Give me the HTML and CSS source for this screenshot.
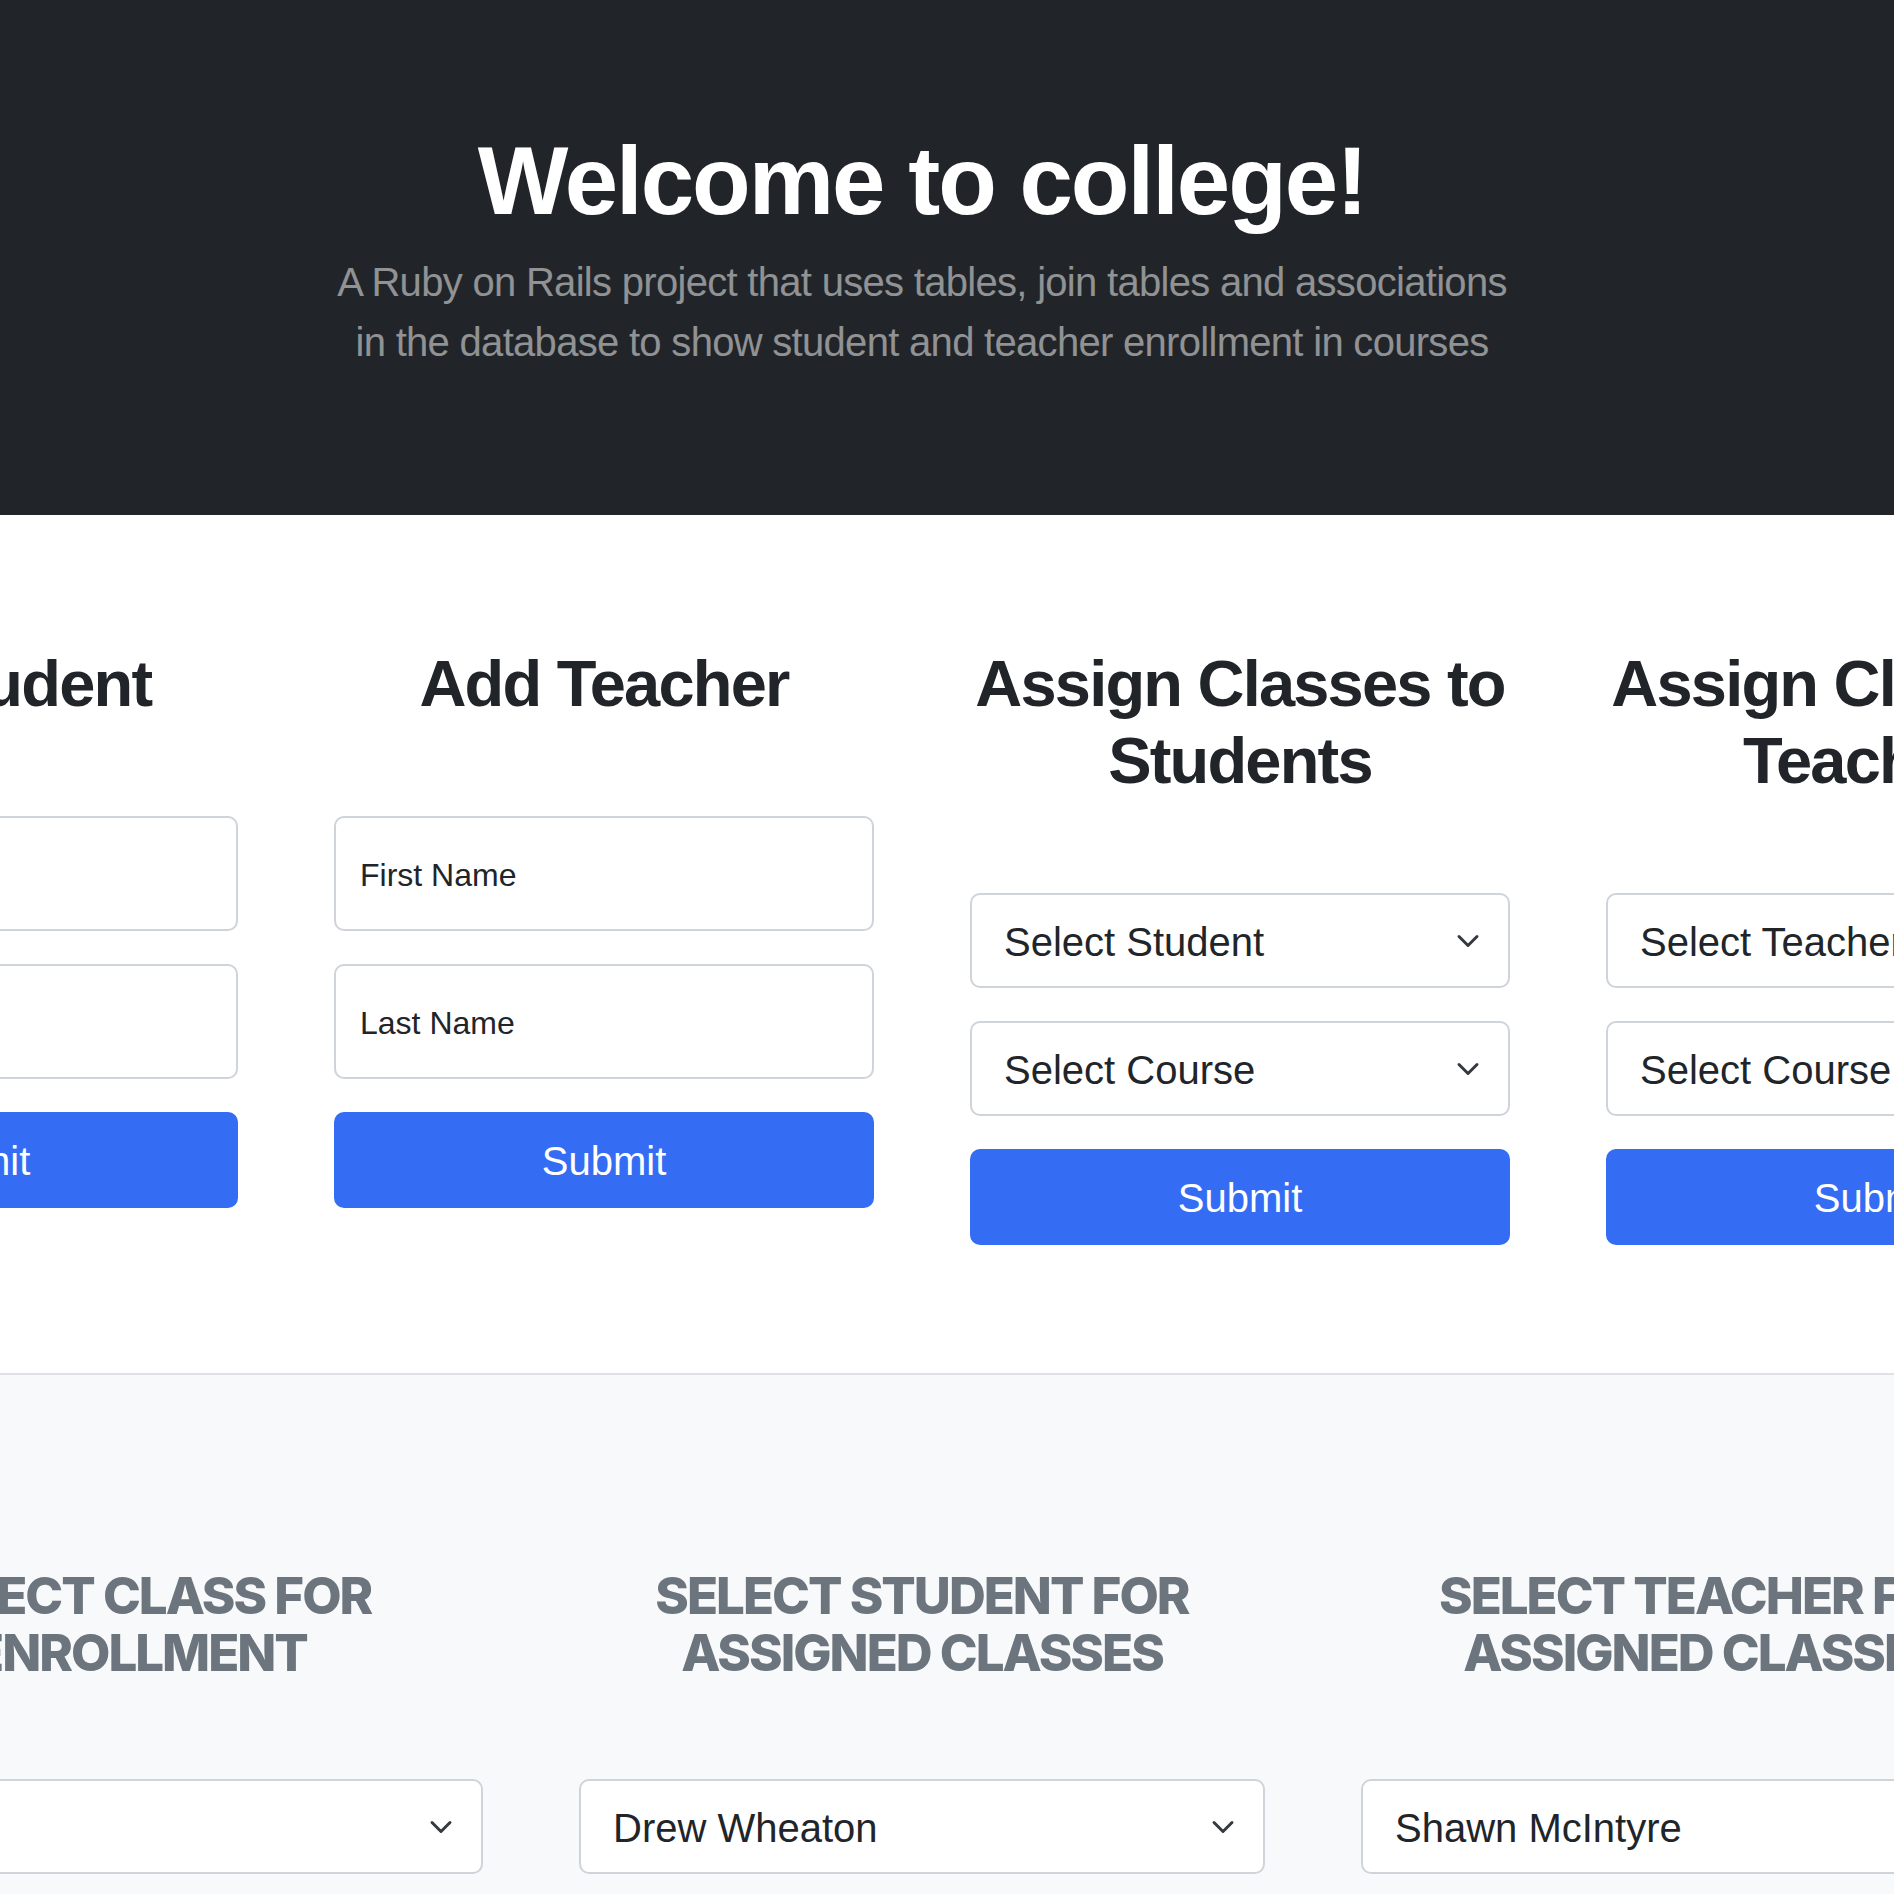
FILE: index.html
```html
<!DOCTYPE html>
<html lang="en">
<head>
<meta charset="utf-8">
<title>Welcome to college!</title>
<link rel="stylesheet" href="styles.css">
</head>
<body>
<header class="hero">
  <div class="inner">
    <h1 class="hero-title">Welcome to college!</h1>
    <p class="hero-lead">A Ruby on Rails project that uses tables, join tables and associations<br>in the database to show student and teacher enrollment in courses</p>
  </div>
</header>

<section class="forms">
  <div class="inner">
    <div class="row row-forms">
      <div class="col">
        <h2 class="col-title">Add Student</h2>
        <form class="stack">
          <input class="field" type="text" placeholder="First Name">
          <input class="field" type="text" placeholder="Last Name">
          <button class="btn" type="button">Submit</button>
        </form>
      </div>
      <div class="col">
        <h2 class="col-title">Add Teacher</h2>
        <form class="stack">
          <input class="field" type="text" placeholder="First Name">
          <input class="field" type="text" placeholder="Last Name">
          <button class="btn" type="button">Submit</button>
        </form>
      </div>
      <div class="col">
        <h2 class="col-title">Assign Classes to<br>Students</h2>
        <form class="stack">
          <div class="select"><span>Select Student</span><svg class="chev" viewBox="0 0 24 24" width="24" height="24"><path d="M3 7.5 12 16.5 21 7.5" fill="none" stroke="#343a40" stroke-width="3" stroke-linecap="round" stroke-linejoin="round"/></svg></div>
          <div class="select"><span>Select Course</span><svg class="chev" viewBox="0 0 24 24" width="24" height="24"><path d="M3 7.5 12 16.5 21 7.5" fill="none" stroke="#343a40" stroke-width="3" stroke-linecap="round" stroke-linejoin="round"/></svg></div>
          <button class="btn" type="button">Submit</button>
        </form>
      </div>
      <div class="col">
        <h2 class="col-title">Assign Classes to<br>Teachers</h2>
        <form class="stack">
          <div class="select"><span>Select Teacher</span><svg class="chev" viewBox="0 0 24 24" width="24" height="24"><path d="M3 7.5 12 16.5 21 7.5" fill="none" stroke="#343a40" stroke-width="3" stroke-linecap="round" stroke-linejoin="round"/></svg></div>
          <div class="select"><span>Select Course</span><svg class="chev" viewBox="0 0 24 24" width="24" height="24"><path d="M3 7.5 12 16.5 21 7.5" fill="none" stroke="#343a40" stroke-width="3" stroke-linecap="round" stroke-linejoin="round"/></svg></div>
          <button class="btn" type="button">Submit</button>
        </form>
      </div>
    </div>
  </div>
</section>

<section class="lists">
  <div class="inner">
    <div class="row row-lists">
      <div class="lcol">
        <h3 class="list-title">Select class for<br>enrollment</h3>
        <div class="select"><span>Algebra</span><svg class="chev" viewBox="0 0 24 24" width="24" height="24"><path d="M3 7.5 12 16.5 21 7.5" fill="none" stroke="#343a40" stroke-width="3" stroke-linecap="round" stroke-linejoin="round"/></svg></div>
      </div>
      <div class="lcol">
        <h3 class="list-title">Select student for<br>assigned classes</h3>
        <div class="select"><span>Drew Wheaton</span><svg class="chev" viewBox="0 0 24 24" width="24" height="24"><path d="M3 7.5 12 16.5 21 7.5" fill="none" stroke="#343a40" stroke-width="3" stroke-linecap="round" stroke-linejoin="round"/></svg></div>
      </div>
      <div class="lcol">
        <h3 class="list-title">Select teacher for<br>assigned classes</h3>
        <div class="select"><span>Shawn McIntyre</span><svg class="chev" viewBox="0 0 24 24" width="24" height="24"><path d="M3 7.5 12 16.5 21 7.5" fill="none" stroke="#343a40" stroke-width="3" stroke-linecap="round" stroke-linejoin="round"/></svg></div>
      </div>
    </div>
  </div>
</section>
</body>
</html>
```

FILE: styles.css
```css
* { box-sizing: border-box; }

html, body {
  margin: 0;
  padding: 0;
  overflow: hidden;
}

body {
  font-family: "Liberation Sans", Arial, sans-serif;
  color: #212529;
  background: #ffffff;
}

.inner {
  width: 1844px;
}

/* Hero */
.hero {
  background: #212529;
  padding: 123px 0 143px;
}

.hero-title {
  margin: 0;
  font-size: 96px;
  line-height: 115px;
  font-weight: 700;
  letter-spacing: -2px;
  color: #ffffff;
  text-align: center;
}

.hero-lead {
  margin: 14px 0 0;
  font-size: 40px;
  line-height: 60px;
  font-weight: 400;
  letter-spacing: -0.7px;
  color: rgba(255, 255, 255, 0.5);
  text-align: center;
}

/* Rows */
.row {
  display: flex;
  justify-content: center;
  gap: 96px;
}

.col { flex: 0 0 540px; }
.lcol { flex: 0 0 686px; }

/* Forms section */
.forms {
  padding: 130px 0 128px;
  border-bottom: 2px solid #dee2e6;
}

.col-title {
  margin: 0 0 94px;
  font-size: 65px;
  line-height: 77px;
  font-weight: 700;
  letter-spacing: -1.8px;
  text-align: center;
  color: #212529;
}

.stack {
  display: flex;
  flex-direction: column;
  gap: 33px;
  margin: 0;
}

.field {
  display: block;
  width: 100%;
  height: 115px;
  margin: 0;
  padding: 3px 24px 0;
  border: 2px solid #ced4da;
  border-radius: 10px;
  background: #ffffff;
  font-family: "Liberation Sans", Arial, sans-serif;
  font-size: 32px;
  color: #212529;
  outline: none;
}

.field::placeholder {
  color: #212529;
  opacity: 1;
}

.select {
  display: flex;
  align-items: center;
  justify-content: space-between;
  height: 95px;
  padding: 3px 28px 0 32px;
  border: 2px solid #ced4da;
  border-radius: 10px;
  background: #ffffff;
  font-size: 40px;
  color: #212529;
  white-space: nowrap;
}

.chev {
  flex: 0 0 24px;
  display: block;
  margin-top: -3px;
}

.btn {
  display: block;
  width: 100%;
  height: 96px;
  margin: 0;
  padding: 2px 32px 0;
  border: 0;
  border-radius: 10px;
  background: #346df3;
  color: #ffffff;
  font-family: "Liberation Sans", Arial, sans-serif;
  font-size: 40px;
  line-height: 60px;
  text-align: center;
  cursor: pointer;
}

/* Lists section */
.lists {
  background: #f8f9fa;
  padding: 192px 0 96px;
}

.list-title {
  margin: 0 0 98px;
  font-family: Inter, "Liberation Sans", sans-serif;
  font-size: 51px;
  line-height: 57px;
  font-weight: 800;
  letter-spacing: -2px;
  text-transform: uppercase;
  text-align: center;
  color: #6c757d;
}
```
